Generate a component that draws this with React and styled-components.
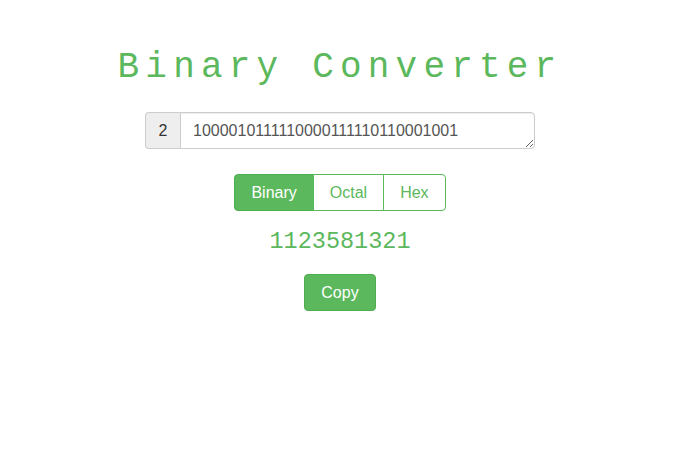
import React, { useState } from "react";
import styled, { createGlobalStyle } from "styled-components";

const GlobalStyle = createGlobalStyle`
  body {
    margin: 0;
    background: #fff;
    font-family: "Liberation Sans", Arial, sans-serif;
    font-size: 14px;
    color: #333;
  }
`;

const Page = styled.div`
  display: flex;
  flex-direction: column;
  align-items: center;
  padding: 48px 0 0 5px;
`;

const Title = styled.h1`
  margin: 0 0 24px;
  font-family: "Liberation Mono", "Courier New", monospace;
  font-weight: normal;
  font-size: 36px;
  line-height: 40px;
  letter-spacing: 6.2px;
  color: #5cb85c;
`;

const InputGroup = styled.div`
  display: flex;
  width: 390px;
  height: 37px;
  margin-bottom: 25px;
`;

const Addon = styled.span`
  display: flex;
  align-items: center;
  justify-content: center;
  box-sizing: border-box;
  width: 35px;
  background: #eee;
  border: 1px solid #ccc;
  border-right: 0;
  border-radius: 4px 0 0 4px;
  font-size: 16px;
  color: #333;
`;

const Field = styled.textarea`
  flex: 1;
  box-sizing: border-box;
  height: 37px;
  margin: 0;
  padding: 7px 12px;
  border: 1px solid #ccc;
  border-radius: 0 4px 4px 0;
  box-shadow: inset 0 1px 1px rgba(0, 0, 0, 0.075);
  font-family: "Liberation Sans", Arial, sans-serif;
  font-size: 16px;
  line-height: 21px;
  color: #555;
  resize: vertical;
  outline: none;
`;

const ButtonGroup = styled.div`
  display: flex;
  margin-bottom: 17px;
`;

const Toggle = styled.button`
  box-sizing: border-box;
  height: 37px;
  padding: 7px 16px;
  margin: 0;
  margin-left: -1px;
  font-family: "Liberation Sans", Arial, sans-serif;
  font-size: 16px;
  line-height: 21px;
  border: 1px solid ${(p) => (p.$active ? "#4cae4c" : "#5cb85c")};
  background: ${(p) => (p.$active ? "#5cb85c" : "#fff")};
  color: ${(p) => (p.$active ? "#fff" : "#5cb85c")};
  cursor: pointer;

  &:first-child {
    margin-left: 0;
    border-radius: 4px 0 0 4px;
  }
  &:last-child {
    border-radius: 0 4px 4px 0;
  }
`;

const Result = styled.div`
  font-family: "Liberation Mono", "Courier New", monospace;
  font-size: 23.5px;
  line-height: 28px;
  color: #5cb85c;
  margin-bottom: 18px;
`;

const CopyButton = styled.button`
  box-sizing: border-box;
  height: 37px;
  padding: 7px 16px;
  font-family: "Liberation Sans", Arial, sans-serif;
  font-size: 16px;
  line-height: 21px;
  color: #fff;
  background: #5cb85c;
  border: 1px solid #4cae4c;
  border-radius: 4px;
  cursor: pointer;
`;

const bases = [
  { label: "Binary", base: 2 },
  { label: "Octal", base: 8 },
  { label: "Hex", base: 16 },
];

export default function App() {
  const [base, setBase] = useState(2);
  const [value, setValue] = useState("1000010111110000111110110001001");
  const parsed = parseInt(value, base);

  return (
    <Page>
      <GlobalStyle />
      <Title>Binary Converter</Title>
      <InputGroup>
        <Addon>{base}</Addon>
        <Field rows={1} value={value} onChange={(e) => setValue(e.target.value)} />
      </InputGroup>
      <ButtonGroup>
        {bases.map((b) => (
          <Toggle key={b.label} $active={b.base === base} onClick={() => setBase(b.base)}>
            {b.label}
          </Toggle>
        ))}
      </ButtonGroup>
      <Result>{isNaN(parsed) ? "" : parsed}</Result>
      <CopyButton>Copy</CopyButton>
    </Page>
  );
}
